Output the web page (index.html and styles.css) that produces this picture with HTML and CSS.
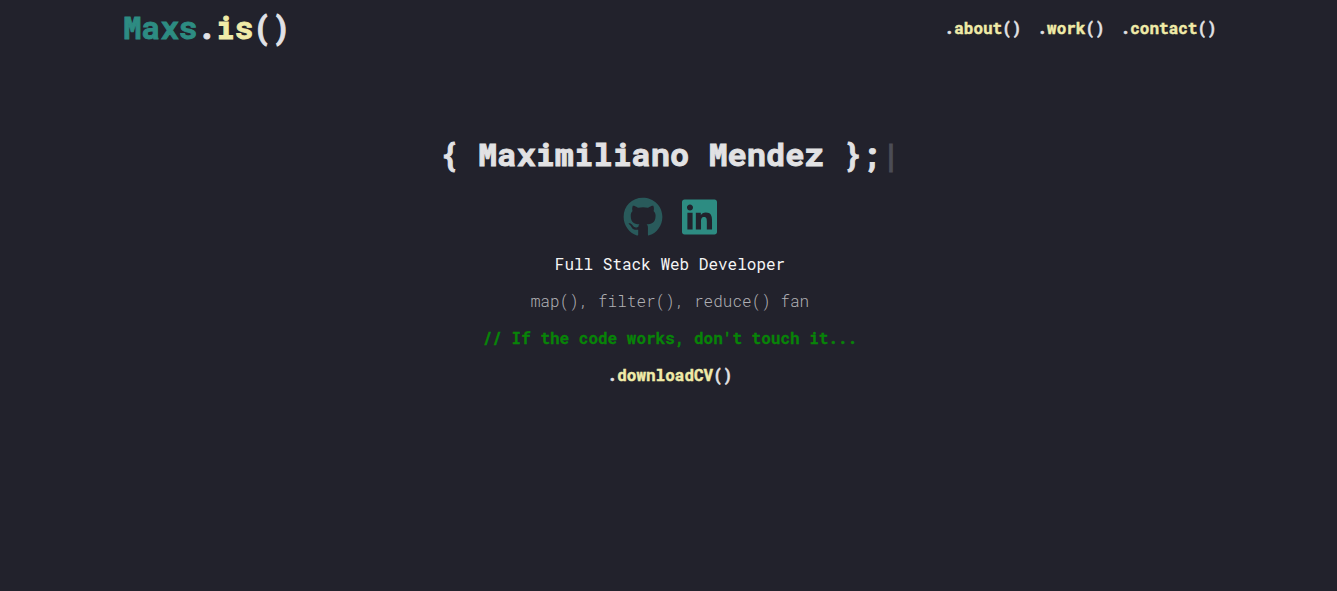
FILE: index.html
```html
<!DOCTYPE html>
<html lang="en">
<head>
<meta charset="utf-8">
<meta name="viewport" content="width=device-width, initial-scale=1">
<title>Maxs.is()</title>
<link rel="stylesheet" href="styles.css">
</head>
<body>
<header class="header">
  <a class="logo" href="#"><span class="brand">Maxs</span>.<span class="fn">is</span>()</a>
  <nav class="nav">
    <a href="#about">.<span class="fn">about</span>()</a>
    <a href="#work">.<span class="fn">work</span>()</a>
    <a href="#contact">.<span class="fn">contact</span>()</a>
  </nav>
</header>
<main class="hero">
  <h1 class="title">{ Maximiliano Mendez };<span class="cursor">|</span></h1>
  <div class="social">
    <a class="github" href="#github" aria-label="GitHub"><svg width="40" height="40" viewBox="0 0 496 512" fill="currentColor"><path d="M165.900 397.400c0 2-2.300 3.600-5.200 3.600-3.300.3-5.600-1.300-5.600-3.600 0-2 2.300-3.600 5.200-3.600 3-.3 5.600 1.300 5.600 3.600zM244.800 8C106.100 8 0 113.300 0 252c0 110.900 69.800 205.800 169.500 239.200 12.800 2.300 17.300-5.600 17.300-12.100 0-6.200-.3-40.400-.3-61.400 0 0-70 15-84.700-29.800 0 0-11.400-29.100-27.800-36.600 0 0-22.900-15.700 1.600-15.400 0 0 24.900 2 38.600 25.800 21.900 38.600 58.600 27.500 72.900 20.900 2.300-16 8.800-27.100 16-33.700-55.900-6.200-112.300-14.300-112.300-110.500 0-27.500 7.600-41.300 23.600-58.900-2.600-6.500-11.100-33.300 2.600-67.900 20.900-6.500 69 27 69 27 20-5.600 41.500-8.500 62.800-8.500s42.800 2.900 62.800 8.500c0 0 48.100-33.600 69-27 13.700 34.700 5.200 61.400 2.600 67.900 16 17.700 25.800 31.500 25.800 58.900 0 96.500-58.900 104.200-114.800 110.500 9.200 7.900 17 22.900 17 46.400 0 33.700-.3 75.400-.3 83.600 0 6.500 4.600 14.400 17.300 12.100C428.200 457.800 496 362.900 496 252 496 113.300 383.500 8 244.800 8z"/></svg></a>
    <a class="linkedin" href="#linkedin" aria-label="LinkedIn"><svg width="35" height="40" viewBox="0 0 448 512" fill="currentColor"><path d="M416 32H31.900C14.300 32 0 46.500 0 64.300v383.400C0 465.500 14.300 480 31.900 480H416c17.600 0 32-14.500 32-32.300V64.300c0-17.800-14.400-32.300-32-32.300zM135.400 416H69V202.200h66.500V416zm-33.200-243c-21.300 0-38.500-17.300-38.500-38.500S80.900 96 102.200 96c21.200 0 38.500 17.300 38.500 38.500 0 21.300-17.200 38.500-38.500 38.500zm282.100 243h-66.400V312c0-24.800-.5-56.700-34.500-56.700-34.600 0-39.900 27-39.900 54.900V416h-66.400V202.200h63.700v29.200h.9c8.900-16.800 30.600-34.500 62.900-34.500 67.200 0 79.700 44.300 79.700 101.900V416z"/></svg></a>
  </div>
  <p>Full Stack Web Developer</p>
  <p class="light">map(), filter(), reduce() fan</p>
  <p class="comment">// If the code works, don't touch it...</p>
  <a class="download" href="#cv">.<span class="fn">downloadCV</span>()</a>
</main>
</body>
</html>
```
FILE: styles.css
```css
body {
  margin: 0;
  background: #22222c;
  color: #f5f5f5;
  font: 16px/21px "Roboto Mono", "DejaVu Sans Mono", monospace;
}

a {
  color: #e2e2e6;
  font-weight: 700;
  text-decoration: none;
  -webkit-text-stroke: 0.03em;
}

.header {
  display: flex;
  justify-content: space-between;
  align-items: center;
  height: 54px;
  padding: 0 9% 0 123px;
}

.logo {
  font-size: 31px;
  line-height: 40px;
}

.nav {
  display: flex;
  gap: 16px;
}

.brand {
  color: #2d8c82;
}

.fn {
  color: #f0eba8;
}

.hero {
  display: flex;
  flex-direction: column;
  align-items: center;
  gap: 16px;
  padding: 79px 16px 32px 19px;
  text-align: center;
}

.title {
  margin: 0;
  color: #e2e2e4;
  font-size: 32px;
  line-height: 42px;
  -webkit-text-stroke: 0.03em;
}

.cursor {
  color: #4c4c56;
}

.social {
  display: flex;
  gap: 19px;
  padding: 6px 0 0;
}

.social a {
  display: flex;
}

.social .github {
  color: #295a5b;
}

.social .linkedin {
  color: #2d8c82;
}

p {
  margin: 0;
}

.light {
  color: #b0b0b4;
  font-weight: 300;
}

.comment {
  color: #088408;
  font-weight: 700;
  -webkit-text-stroke: 0.02em;
}
```
